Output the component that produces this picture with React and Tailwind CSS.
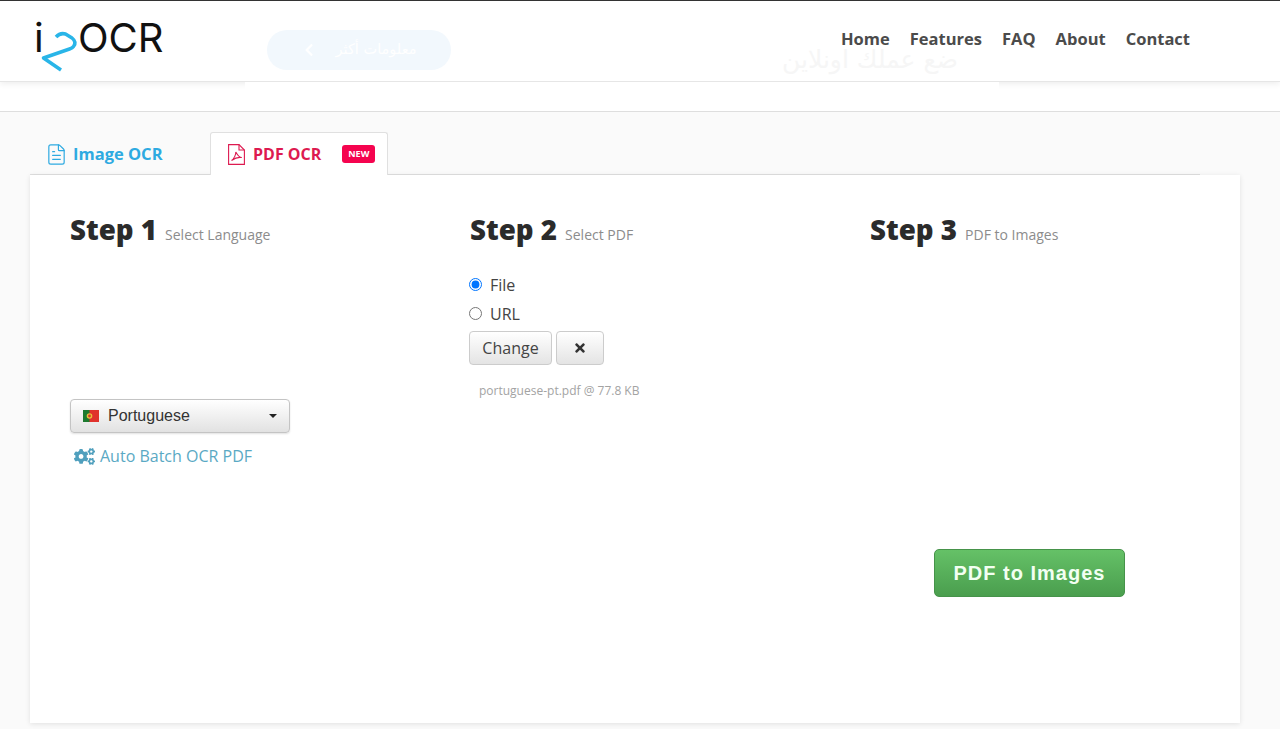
import { FaCogs, FaChevronLeft, FaTimes } from 'react-icons/fa';
import { FileText } from 'lucide-react';

const NAV_ITEMS = ['Home', 'Features', 'FAQ', 'About', 'Contact'];

function Logo() {
  return (
    <div className="relative w-[130px] h-[50px] font-['Inter',sans-serif] font-normal text-[#111] leading-none">
      <span className="absolute -left-px top-[8px] text-[40px]">i</span>
      <span className="absolute left-[43px] top-[8px] text-[40px]">OCR</span>
      <svg className="absolute left-0 top-0" width="70" height="72" viewBox="35 10 70 72" fill="none">
        <path
          d="M56 37 Q60 32.5 65.5 34 L72 38 Q77 42 73.5 46.5 Q72.5 48 69.5 49 L43.5 58 L61 70"
          stroke="#29b5e8"
          strokeWidth="3.5"
          strokeLinejoin="round"
        />
      </svg>
    </div>
  );
}

function PdfIcon() {
  return (
    <svg width="17" height="21" viewBox="0 0 17 21" fill="none" stroke="currentColor" strokeWidth="1.1">
      <path d="M0.6 0.6 H11 L16.4 6 V20.4 H0.6 Z" />
      <path d="M11 0.6 V6 H16.4" />
      <path d="M3.5 16.5 C6 15 8 10.5 7.8 8 C10 12 11.5 13.5 13.8 13.5 C11 13 7 14 3.5 16.5 Z" />
    </svg>
  );
}

function Header() {
  return (
    <header className="relative h-[82px] bg-white border-t border-t-[#333] border-b border-b-[#e6e6e6] shadow-[0_2px_6px_rgba(0,0,0,0.07)] flex items-start">
      <div className="ml-[35px] mt-[9px] w-[232px] shrink-0">
        <Logo />
      </div>
      <div className="mt-[29px] w-[184px] h-10 rounded-full bg-[#f2f8fd] flex items-center justify-center gap-5 text-white shrink-0">
        <FaChevronLeft className="text-[14px]" />
        <span className="font-['DejaVu_Sans',sans-serif] text-[14.5px]">معلومات أكثر</span>
      </div>
      <div className="ml-[329px] mt-[49px] w-[180px] text-center font-['DejaVu_Sans',sans-serif] text-[25px] leading-5 text-[#f6f6f6] whitespace-nowrap shrink-0">
        ضع عملك اونلاين
      </div>
      <nav className="absolute top-[28px] left-[841px] flex gap-5 font-['Open_Sans',sans-serif] font-bold text-[16.5px] leading-5 text-[#4b4b4b]">
        {NAV_ITEMS.map((item) => (
          <a key={item} href="#">{item}</a>
        ))}
      </nav>
    </header>
  );
}

function Tabs() {
  return (
    <div className="flex items-end h-[63px] ml-[30px] w-[1170px] border-b border-[#e0e0e0] font-['Open_Sans',sans-serif]">
      <div className="w-[180px] h-[43px] pl-[15px] pt-[4px] flex items-center gap-[5px] text-[#2eaae1] font-bold text-[16.5px]">
        <FileText size={23} strokeWidth={1.25} />
        <span>Image OCR</span>
      </div>
      <div className="w-[178px] h-[43px] -mb-px pl-[17px] flex items-center bg-white border border-b-0 border-[#e0e0e0] rounded-t-[3px] text-[#dd1a50] font-bold text-[16px]">
        <PdfIcon />
        <span className="ml-2">PDF OCR</span>
        <span className="ml-[21px] w-[33px] h-[18px] rounded-[3px] bg-[#f5044f] text-white text-[9px] leading-[18px] text-center font-bold">NEW</span>
      </div>
    </div>
  );
}

function StepTitle({ n, label }) {
  return (
    <div className="flex items-baseline gap-2 h-[43px] -mt-px">
      <span className="font-extrabold text-[27.7px] leading-[42px] text-[#2b2b2b]">Step {n}</span>
      <span className="text-[14px] text-[#8c8c8c]">{label}</span>
    </div>
  );
}

function Flag() {
  return (
    <svg width="16" height="12" viewBox="0 0 16 12">
      <rect width="16" height="12" fill="#e0322c" />
      <rect width="6.5" height="12" fill="#1d7a2f" />
      <circle cx="6.5" cy="6" r="2.8" fill="#e8c23a" />
      <circle cx="6.5" cy="6" r="1.4" fill="#d03a2c" />
    </svg>
  );
}

function StepLanguage() {
  return (
    <div>
      <StepTitle n={1} label="Select Language" />
      <div className="mt-[148px] w-[220px] h-[34px] flex items-center pl-[12px] pr-3 rounded border border-[#c4c4c4] bg-gradient-to-b from-white to-[#e2e2e2] shadow-[0_1px_2px_rgba(0,0,0,0.12)] font-['Liberation_Sans',sans-serif] text-[16px] text-[#333]">
        <Flag />
        <span className="ml-[9px] flex-1">Portuguese</span>
        <span className="w-0 h-0 border-x-4 border-x-transparent border-t-4 border-t-[#222]" />
      </div>
      <a href="#" className="mt-[11px] ml-[4px] flex items-center gap-[5px] text-[16px] leading-6 text-[#5aa9c4]">
        <FaCogs className="text-[21px] text-[#4f9fbd]" />
        Auto Batch OCR PDF
      </a>
    </div>
  );
}

function StepFile() {
  return (
    <div>
      <StepTitle n={2} label="Select PDF" />
      <div className="-ml-px">
        <div className="mt-[20px] text-[16px] leading-[29px] text-[#444]">
          <label className="flex items-center gap-[8px]">
            <input type="radio" name="src" defaultChecked className="w-[13px] h-[13px] m-0 -mt-[3px]" />
            File
          </label>
          <label className="flex items-center gap-[8px]">
            <input type="radio" name="src" className="w-[13px] h-[13px] m-0 -mt-[3px]" />
            URL
          </label>
        </div>
        <div className="flex gap-1 mt-[2px]">
          <button className="w-[83px] h-[34px] rounded border border-[#ccc] bg-gradient-to-b from-white to-[#e4e4e4] text-[16px] text-[#444]">Change</button>
          <button className="w-[48px] h-[34px] flex items-center justify-center rounded border border-[#ccc] bg-gradient-to-b from-white to-[#e4e4e4] text-[#333]">
            <FaTimes className="text-[14px]" />
          </button>
        </div>
        <p className="mt-[18px] ml-[10px] text-[12px] leading-4 text-[#a3a3a3]">portuguese-pt.pdf @ 77.8 KB</p>
      </div>
    </div>
  );
}

function StepConvert() {
  return (
    <div>
      <StepTitle n={3} label="PDF to Images" />
      <button className="mt-[298px] ml-[64px] w-[191px] h-[48px] rounded-[5px] border border-[#46934a] bg-gradient-to-b from-[#65c167] to-[#4a9e4e] font-['Liberation_Sans',sans-serif] font-bold text-[20px] tracking-[1px] text-[#f2fff2]">
        PDF to Images
      </button>
    </div>
  );
}

export default function App() {
  return (
    <div className="h-[729px] overflow-hidden bg-[#fafafa] font-['Open_Sans',sans-serif]">
      <Header />
      <div className="h-[30px] bg-white border-b border-[#dedede]">
        <div className="relative ml-[245px] w-[754px] h-full bg-white" />
      </div>
      <Tabs />
      <main className="ml-[30px] w-[1210px] h-[548px] bg-white shadow-[0_1px_5px_rgba(0,0,0,0.1)] pt-[34px] pl-[40px] grid grid-cols-[400px_400px_400px]">
        <StepLanguage />
        <StepFile />
        <StepConvert />
      </main>
    </div>
  );
}
